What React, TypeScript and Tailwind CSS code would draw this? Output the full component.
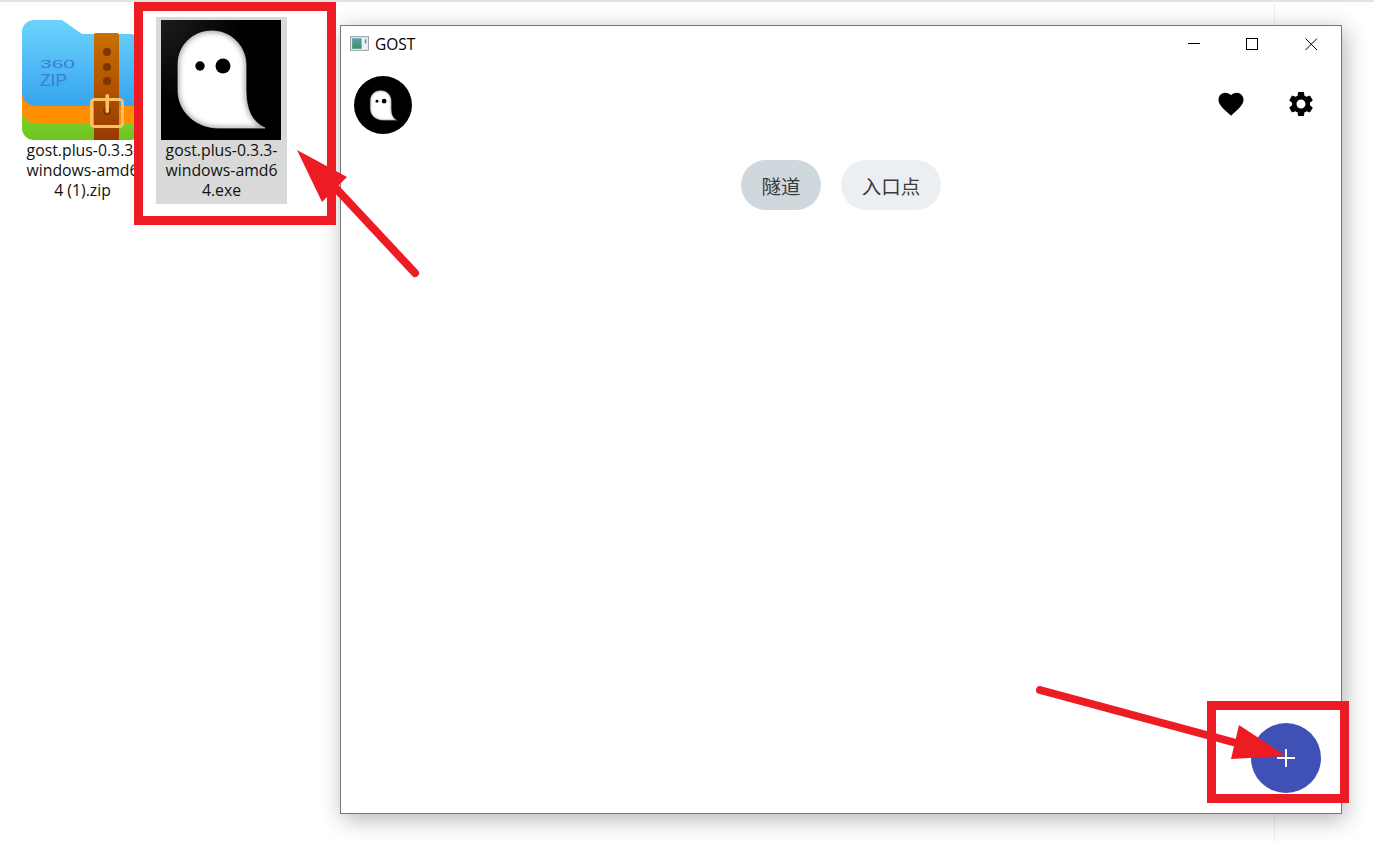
export default function App() {
  return (
    <div className="relative h-[842px] w-[1374px] overflow-hidden bg-white font-['Open_Sans','Noto_Sans_CJK_SC',sans-serif] text-black">
      <div className="h-[2px] bg-[#e3e3e3]" />
      <div className="absolute left-[1274px] top-0 h-full w-px bg-[#f0f0f0]" />

      {/* Desktop files */}
      <div className="flex gap-[8px] pl-[17px] pt-[15px]">
        <FileItem name={["gost.plus-0.3.3-", "windows-amd6", "4 (1).zip"]}>
          <ZipIcon />
        </FileItem>
        <FileItem selected name={["gost.plus-0.3.3-", "windows-amd6", "4.exe"]}>
          <GhostIcon id="big" />
        </FileItem>
      </div>

      {/* App window */}
      <div className="absolute left-[340px] top-[25px] flex h-[789px] w-[1002px] flex-col border border-[#777] bg-white shadow-[3px_5px_22px_rgba(0,0,0,0.3)]">
        <div className="flex h-[37px] shrink-0 items-center pl-[9px]">
          <svg width="19" height="15" viewBox="0 0 18 14" className="mr-[6px] mt-[-2px]">
            <defs>
              <linearGradient id="tb" x1="0" y1="0" x2="0" y2="1">
                <stop offset="0" stopColor="#5aa0b4" />
                <stop offset="1" stopColor="#3f8f5f" />
              </linearGradient>
            </defs>
            <rect x="0.5" y="0.5" width="17" height="13" fill="#eef1f4" stroke="#9aa3ab" />
            <rect x="2" y="2" width="9" height="10" fill="url(#tb)" />
            <rect x="14" y="3" width="1.5" height="4" fill="#4a9aa8" />
          </svg>
          <span className="text-[15.5px] leading-none">GOST</span>
          <div className="ml-auto flex items-center">
            <svg width="59" height="14" viewBox="0 0 59 14" className="mt-[-1px]" fill="none" stroke="#000">
              <path d="M7 6.5 H19" />
            </svg>
            <svg width="59" height="14" viewBox="0 0 59 14" className="mt-[-1px]" fill="none" stroke="#000">
              <rect x="6.5" y="1.5" width="11" height="11" />
            </svg>
            <svg width="42" height="14" viewBox="0 0 42 14" className="mt-[-1px]" fill="none" stroke="#000">
              <path d="M6.5 1.5 L18 13 M18 1.5 L6.5 13" />
            </svg>
          </div>
        </div>

        <div className="flex shrink-0 items-center pl-[13px] pr-[25px] pt-[13px]">
          <div className="flex h-[58px] w-[58px] items-center justify-center rounded-full bg-black">
            <div className="h-[37px] w-[37px]">
              <GhostIcon id="small" />
            </div>
          </div>
          <div className="ml-auto mt-[-2px] flex items-center gap-[40px]">
            <svg width="30" height="30" viewBox="0 0 24 24" fill="#000">
              <path d="M12 21.35l-1.45-1.32C5.4 15.36 2 12.28 2 8.5 2 5.42 4.42 3 7.5 3c1.74 0 3.41.81 4.5 2.09C13.09 3.81 14.76 3 16.5 3 19.58 3 22 5.42 22 8.5c0 3.78-3.4 6.86-8.55 11.54L12 21.35z" />
            </svg>
            <svg width="30" height="30" viewBox="0 0 24 24" fill="#000">
              <path d="M19.14 12.94c.04-.3.06-.61.06-.94 0-.32-.02-.64-.07-.94l2.03-1.58c.18-.14.23-.41.12-.61l-1.92-3.32c-.12-.22-.37-.29-.59-.22l-2.39.96c-.5-.38-1.03-.7-1.62-.94l-.36-2.54c-.04-.24-.24-.41-.48-.41h-3.84c-.24 0-.43.17-.47.41l-.36 2.54c-.59.24-1.13.57-1.62.94l-2.39-.96c-.22-.08-.47 0-.59.22L2.74 8.87c-.12.21-.08.47.12.61l2.03 1.58c-.05.3-.09.63-.09.94s.02.64.07.94l-2.03 1.58c-.18.14-.23.41-.12.61l1.92 3.32c.12.22.37.29.59.22l2.39-.96c.5.38 1.03.7 1.62.94l.36 2.54c.05.24.24.41.48.41h3.84c.24 0 .44-.17.47-.41l.36-2.54c.59-.24 1.13-.56 1.62-.94l2.39.96c.22.08.47 0 .59-.22l1.92-3.32c.12-.22.07-.47-.12-.61l-2.01-1.58zM12 15.6c-1.98 0-3.6-1.62-3.6-3.6s1.62-3.6 3.6-3.6 3.6 1.62 3.6 3.6-1.62 3.6-3.6 3.6z" />
            </svg>
          </div>
        </div>

        <div className="flex shrink-0 justify-center gap-[20px] pt-[26px] text-[19.5px] leading-none text-[#3a3a3a]">
          <div className="flex h-[50px] w-[80px] items-center justify-center rounded-[25px] bg-[#cfd8dc] pt-[3px]">隧道</div>
          <div className="flex h-[50px] w-[100px] items-center justify-center rounded-[25px] bg-[#eceff1] pt-[3px]">入口点</div>
        </div>

        <div className="absolute left-[910px] top-[697px] flex h-[70px] w-[70px] items-center justify-center rounded-full bg-[#3f51b5]">
          <svg width="18" height="18" viewBox="0 0 18 18" stroke="#fff" strokeWidth="2">
            <path d="M9 0 V18 M0 9 H18" />
          </svg>
        </div>
      </div>

      {/* Annotations */}
      <div className="absolute left-[134px] top-[2px] h-[223px] w-[202px] border-[9px] border-[#ed1c24]" />
      <div className="absolute left-[1207px] top-[701px] h-[102px] w-[142px] border-[9px] border-[#ed1c24]" />
      <svg className="pointer-events-none absolute left-0 top-0" width="1374" height="842" viewBox="0 0 1374 842">
        <path d="M415 273 L330 182" stroke="#ed1c24" strokeWidth="8" strokeLinecap="round" fill="none" />
        <path d="M297 150 L347 177 L322 202 Z" fill="#ed1c24" />
        <path d="M1040 690 L1240 744" stroke="#ed1c24" strokeWidth="8" strokeLinecap="round" fill="none" />
        <path d="M1286 756 L1239 725 L1231 759 Z" fill="#ed1c24" />
      </svg>
    </div>
  );
}

function FileItem({ name, selected, children }: { name: string[]; selected?: boolean; children: React.ReactNode }) {
  return (
    <div className={`flex h-[187px] w-[131px] flex-col pt-[3px] ${selected ? "bg-[#d9d9d9]" : ""}`}>
      <div className="ml-[5px] h-[120px] w-[120px] shrink-0">{children}</div>
      <div className="flex flex-col items-center text-[15.8px] leading-[20px] text-[#111]">
        {name.map((line) => (
          <div key={line} className="whitespace-nowrap">
            {line}
          </div>
        ))}
      </div>
    </div>
  );
}

function GhostIcon({ id }: { id: string }) {
  const d = "M17 45 C17 24 33 11 51 11 C70 11 85 26 85 45 L85 70 C85 90 91 102 104 108 L58 108 C35 108 17 92 17 70 Z";
  return (
    <svg width="100%" height="100%" viewBox="0 0 120 120" className="block">
      <defs>
        <radialGradient id={`${id}-bg`} cx="0" cy="0" r="1">
          <stop offset="0" stopColor="#1c1c1c" />
          <stop offset="0.7" stopColor="#000" />
        </radialGradient>
        <clipPath id={`${id}-clip`}>
          <path d={d} />
        </clipPath>
        <filter id={`${id}-blur`} x="-20%" y="-20%" width="140%" height="140%">
          <feGaussianBlur stdDeviation="3" />
        </filter>
      </defs>
      <rect width="120" height="120" fill={id === "small" ? "#000" : `url(#${id}-bg)`} />
      <path d={d} fill="#7a7a7a" stroke="#bbb" strokeWidth="0.8" />
      <g clipPath={`url(#${id}-clip)`}>
        <path d={d} fill="#fff" filter={`url(#${id}-blur)`} />
      </g>
      <circle cx="39" cy="46" r="4.7" fill="#000" />
      <circle cx="62" cy="46" r="7.5" fill="#000" />
    </svg>
  );
}

function ZipIcon() {
  return (
    <svg width="120" height="120" viewBox="0 0 120 120" className="block">
      <defs>
        <linearGradient id="zipBlue" x1="0" y1="0" x2="0" y2="1">
          <stop offset="0" stopColor="#6bd3fb" />
          <stop offset="1" stopColor="#36a4f0" />
        </linearGradient>
        <linearGradient id="zipStrap" x1="0" y1="0" x2="0" y2="1">
          <stop offset="0" stopColor="#c96f00" />
          <stop offset="1" stopColor="#983a00" />
        </linearGradient>
        <linearGradient id="zipGreen" x1="0" y1="0" x2="0" y2="1">
          <stop offset="0" stopColor="#86d62a" />
          <stop offset="1" stopColor="#6fc423" />
        </linearGradient>
      </defs>
      <path d="M0 80 H120 V108 A12 12 0 0 1 108 120 H12 A12 12 0 0 1 0 108 Z" fill="url(#zipGreen)" />
      <path d="M0 70 H120 V103 H16 Q3 103 0 94 Z" fill="#ff8f00" />
      <path d="M12 0 H40 L60 14 H108 A12 12 0 0 1 120 26 V86 H14 A14 14 0 0 1 0 72 V12 A12 12 0 0 1 12 0 Z" fill="url(#zipBlue)" />
      <text x="18" y="48" fontFamily="'Liberation Sans',sans-serif" fontSize="11" fill="#3a80d0" textLength="35" lengthAdjust="spacingAndGlyphs">360</text>
      <text x="18" y="66" fontFamily="'Liberation Sans',sans-serif" fontSize="17" fill="#3a80d0" textLength="27" lengthAdjust="spacingAndGlyphs">ZIP</text>
      <path d="M72 15 A2 2 0 0 1 74 13 H95 A2 2 0 0 1 97 15 V120 H72 Z" fill="url(#zipStrap)" />
      <circle cx="85" cy="32" r="4" fill="#7e3600" />
      <circle cx="85" cy="47" r="4" fill="#7e3600" />
      <circle cx="85" cy="61" r="4" fill="#7e3600" />
      <rect x="69.5" y="79.5" width="31" height="27" rx="3" fill="none" stroke="#ffc063" strokeWidth="3" />
      <circle cx="85" cy="91" r="4" fill="#7e3600" />
      <rect x="83.5" y="74" width="3.5" height="19" rx="1.7" fill="#ffc063" />
    </svg>
  );
}
